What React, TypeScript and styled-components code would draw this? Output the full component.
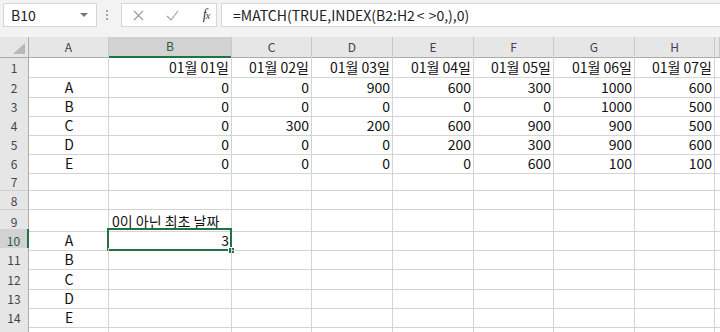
import React from "react";
import styled, { createGlobalStyle, css } from "styled-components";

const GlobalStyle = createGlobalStyle`
  html, body { margin: 0; padding: 0; background: #ffffff; overflow: hidden; }
  body { font-family: "Noto Sans CJK KR", "Noto Sans", sans-serif; }
  * { box-sizing: border-box; }
`;

const GREEN = "#217346";
const COLS = "29px 80px 123px 80px 81px 81px 80px 81px 80px 1fr";

const Window = styled.div`
  width: 720px;
  height: 332px;
  overflow: hidden;
  background: #ffffff;
  display: flex;
  flex-direction: column;
`;

const TopBar = styled.div`
  height: 37px;
  flex: none;
  background: #f3f3f3;
  display: flex;
  align-items: flex-start;
  padding: 3px 0 0 3px;
`;

const NameBox = styled.div`
  width: 94px;
  height: 24px;
  border: 1px solid #d6d6d6;
  background: #ffffff;
  display: flex;
  align-items: center;
  justify-content: space-between;
  padding: 0 8px 0 7px;
  font-size: 14px;
  color: #222222;
`;

const DropArrow = styled.span`
  width: 0;
  height: 0;
  border-left: 4px solid transparent;
  border-right: 4px solid transparent;
  border-top: 4px solid #777777;
`;

const Grip = styled.div`
  width: 2px;
  height: 24px;
  margin: 0 13px 0 9px;
  display: flex;
  flex-direction: column;
  align-items: center;
  justify-content: center;
  gap: 2px;
`;

const GripDot = styled.span`
  width: 2px;
  height: 2px;
  background: #a6a6a6;
`;

const ButtonBox = styled.div`
  width: 96px;
  height: 24px;
  border: 1px solid #d6d6d6;
  background: #ffffff;
  display: flex;
  align-items: center;
  padding-left: 10px;
`;

const IconSlot = styled.span<{ $w: number }>`
  width: ${(p) => p.$w}px;
  display: flex;
  align-items: center;
  justify-content: center;
`;

const Fx = styled.span`
  font-family: "Liberation Serif", serif;
  font-style: italic;
  font-size: 14px;
  color: #333333;
  letter-spacing: -1px;
  & small { font-size: 10px; }
`;

const FormulaBox = styled.div`
  flex: 1;
  height: 24px;
  margin-left: 4px;
  border: 1px solid #d6d6d6;
  border-right: none;
  background: #ffffff;
  display: flex;
  align-items: center;
  padding-left: 11px;
  font-size: 14px;
  color: #222222;
  white-space: nowrap;
`;

const Op = styled.span`
  padding-left: 2px;
  margin-right: 4px;
`;

const Sheet = styled.div`
  flex: 1;
  display: flex;
  flex-direction: column;
`;

const Row = styled.div<{ $h: number }>`
  display: grid;
  grid-template-columns: ${COLS};
  height: ${(p) => p.$h}px;
  flex: none;
`;

const Corner = styled.div`
  background: #e6e6e6;
  border-right: 1px solid #ababab;
  border-bottom: 1px solid #ababab;
  position: relative;
  &::after {
    content: "";
    position: absolute;
    right: 3px;
    bottom: 3px;
    width: 0;
    height: 0;
    border-left: 12px solid transparent;
    border-bottom: 11px solid #b7b7b7;
  }
`;

const ColHead = styled.div<{ $sel?: boolean }>`
  background: ${(p) => (p.$sel ? "#d2d2d2" : "#e6e6e6")};
  border-right: 1px solid #c8c8c8;
  border-bottom: ${(p) => (p.$sel ? `2px solid ${GREEN}` : "1px solid #ababab")};
  display: flex;
  align-items: center;
  justify-content: center;
  font-size: 12px;
  color: ${(p) => (p.$sel ? "#1e5d3a" : "#444444")};
  padding-bottom: 2px;
`;

const RowHead = styled.div<{ $sel?: boolean }>`
  background: ${(p) => (p.$sel ? "#d2d2d2" : "#e6e6e6")};
  border-right: ${(p) => (p.$sel ? `2px solid ${GREEN}` : "1px solid #ababab")};
  border-bottom: 1px solid #cfcfcf;
  display: flex;
  align-items: center;
  justify-content: center;
  font-size: 12px;
  color: ${(p) => (p.$sel ? "#1e5d3a" : "#444444")};
  padding-top: 1px;
`;

type Align = "left" | "center" | "right";

const Cell = styled.div<{ $align?: Align }>`
  position: relative;
  border-right: 1px solid #d4d4d4;
  border-bottom: 1px solid #d4d4d4;
  display: flex;
  align-items: center;
  font-size: 14px;
  color: #111111;
  white-space: nowrap;
  padding: 1px 2px 0 3px;
  ${(p) =>
    p.$align === "right"
      ? css`justify-content: flex-end;`
      : p.$align === "center"
      ? css`justify-content: center;`
      : css`justify-content: flex-start;`}
`;

const Selection = styled.div`
  position: absolute;
  left: -2px;
  top: -1px;
  right: -1px;
  bottom: -1px;
  border: 2px solid ${GREEN};
  pointer-events: none;
`;

const Handle = styled.span`
  position: absolute;
  right: -5px;
  bottom: -5px;
  width: 7px;
  height: 7px;
  background: ${GREEN};
  border: 1px solid #ffffff;
`;

const letters = ["A", "B", "C", "D", "E", "F", "G", "H", ""];

const heights = [20, 19, 19, 19, 19, 20, 19, 19, 19, 19, 20, 19, 19, 19, 19];

type CellData = { v: string; a?: Align };

const rows: CellData[][] = [
  [{ v: "" }, ...["01", "02", "03", "04", "05", "06", "07"].map((d) => ({ v: `01월 ${d}일`, a: "right" as Align }))],
  [{ v: "A", a: "center" }, ...[0, 0, 900, 600, 300, 1000, 600].map((n) => ({ v: String(n), a: "right" as Align }))],
  [{ v: "B", a: "center" }, ...[0, 0, 0, 0, 0, 1000, 500].map((n) => ({ v: String(n), a: "right" as Align }))],
  [{ v: "C", a: "center" }, ...[0, 300, 200, 600, 900, 900, 500].map((n) => ({ v: String(n), a: "right" as Align }))],
  [{ v: "D", a: "center" }, ...[0, 0, 0, 200, 300, 900, 600].map((n) => ({ v: String(n), a: "right" as Align }))],
  [{ v: "E", a: "center" }, ...[0, 0, 0, 0, 600, 100, 100].map((n) => ({ v: String(n), a: "right" as Align }))],
  [],
  [],
  [{ v: "" }, { v: "0이 아닌 최초 날짜", a: "left" }],
  [{ v: "A", a: "center" }, { v: "3", a: "right" }],
  [{ v: "B", a: "center" }],
  [{ v: "C", a: "center" }],
  [{ v: "D", a: "center" }],
  [{ v: "E", a: "center" }],
  [],
];

const CloseIcon = () => (
  <svg width="11" height="11" viewBox="0 0 11 11">
    <path d="M1 1 L10 10 M10 1 L1 10" stroke="#9a9a9a" strokeWidth="1.1" fill="none" />
  </svg>
);

const CheckIcon = () => (
  <svg width="13" height="11" viewBox="0 0 13 11">
    <path d="M1 6 L5 10 L12 1" stroke="#9a9a9a" strokeWidth="1.1" fill="none" />
  </svg>
);

export default function App() {
  return (
    <Window>
      <GlobalStyle />
      <TopBar>
        <NameBox>
          <span>B10</span>
          <DropArrow />
        </NameBox>
        <Grip>
          <GripDot />
          <GripDot />
          <GripDot />
        </Grip>
        <ButtonBox>
          <IconSlot $w={12}>
            <CloseIcon />
          </IconSlot>
          <IconSlot $w={56}>
            <CheckIcon />
          </IconSlot>
          <IconSlot $w={12}>
            <Fx>
              f<small>x</small>
            </Fx>
          </IconSlot>
        </ButtonBox>
        <FormulaBox>
          =MATCH(TRUE,INDEX(B2:H2<Op>&lt;</Op>&gt;0,),0)
        </FormulaBox>
      </TopBar>
      <Sheet>
        <Row $h={19}>
          <Corner />
          {letters.map((l, i) => (
            <ColHead key={i} $sel={l === "B"}>
              {l}
            </ColHead>
          ))}
        </Row>
        {heights.map((h, r) => (
          <Row key={r} $h={h}>
            <RowHead $sel={r === 9}>{r < 14 ? r + 1 : ""}</RowHead>
            {letters.map((_, c) => {
              const d = rows[r][c];
              return (
                <Cell key={c} $align={d?.a}>
                  {d?.v}
                  {r === 9 && c === 1 && (
                    <Selection>
                      <Handle />
                    </Selection>
                  )}
                </Cell>
              );
            })}
          </Row>
        ))}
      </Sheet>
    </Window>
  );
}
